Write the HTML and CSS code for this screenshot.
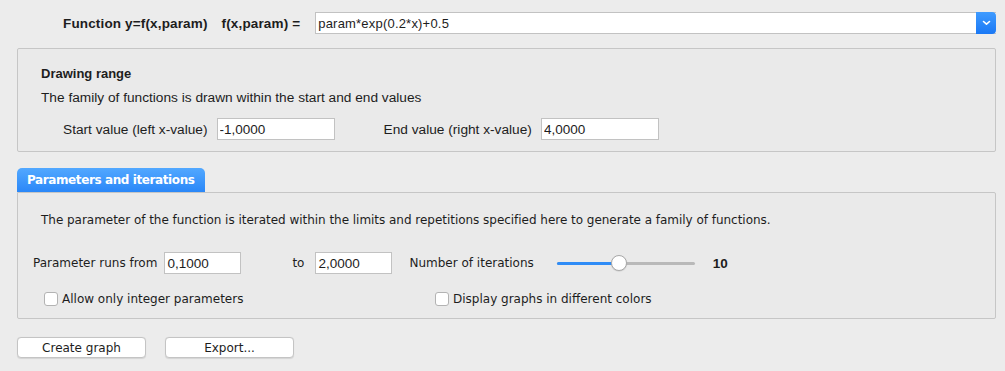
FILE: index.html
```html
<!DOCTYPE html>
<html lang="en">
<head>
  <meta name="viewport" content="width=device-width, initial-scale=1.0">
  <link rel="stylesheet" href="styles.css">
</head>
<body>
  <div class="window">

    <div class="func-row">
      <span class="func-label">Function y=f(x,param)</span>
      <span class="func-label eq">f(x,param) =</span>
      <div class="combo">
        <span class="combo-text">param*exp(0.2*x)+0.5</span>
        <div class="combo-btn">
          <svg width="9" height="6" viewBox="0 0 9 6"><path d="M1.5 1.5 L4.5 4.2 L7.5 1.5" fill="none" stroke="#fff" stroke-width="1.6" stroke-linecap="round" stroke-linejoin="round"/></svg>
        </div>
      </div>
    </div>

    <!-- Drawing range -->
    <div class="group range">
      <div class="group-title">Drawing range</div>
      <div class="group-desc">The family of functions is drawn within the start and end values</div>
      <div class="range-row">
        <span class="lbl start-lbl">Start value (left x-value)</span>
        <input class="field rfield" type="text" value="-1,0000">
        <span class="lbl end-lbl">End value (right x-value)</span>
        <input class="field rfield" type="text" value="4,0000">
      </div>
    </div>

    <!-- Parameters -->
    <div class="tab">Parameters and iterations</div>
    <div class="group params">
      <div class="params-desc">The parameter of the function is iterated within the limits and repetitions specified here to generate a family of functions.</div>
      <div class="params-row">
        <span class="plbl">Parameter runs from</span>
        <input class="field pfield from" type="text" value="0,1000">
        <span class="plbl to-lbl">to</span>
        <input class="field pfield" type="text" value="2,0000">
        <span class="plbl iter-lbl">Number of iterations</span>
        <div class="slider">
          <div class="slider-fill"></div>
          <div class="slider-thumb"></div>
        </div>
        <span class="iter-val">10</span>
      </div>
      <div class="check-row">
        <label class="check first"><span class="box"></span>Allow only integer parameters</label>
        <label class="check second"><span class="box"></span>Display graphs in different colors</label>
      </div>
    </div>

    <div class="buttons">
      <button class="btn">Create graph</button>
      <button class="btn">Export...</button>
    </div>

  </div>
</body>
</html>
```

FILE: styles.css
```css
html,
body {
  margin: 0;
  padding: 0;
  background: #ececec;
  font-family: "Liberation Sans", Arial, sans-serif;
  font-size: 13.7px;
  color: #1d1d1d;
}

.window {
  width: 1005px;
  height: 371px;
  overflow: hidden;
}

/* function row */
.func-row {
  display: flex;
  align-items: center;
  padding-top: 12px;
  height: 22px;
}

.func-label {
  font-weight: bold;
  font-size: 13.5px;
  letter-spacing: 0.15px;
  margin-left: 63px;
}

.func-label.eq {
  margin-left: 14px;
}

.combo {
  margin-left: 15px;
  flex: 1;
  margin-right: 9px;
  height: 22px;
  box-sizing: border-box;
  background: #fff;
  border: 1px solid #c2c2c2;
  border-right: none;
  display: flex;
  align-items: center;
}

.combo-text {
  flex: 1;
  padding-left: 2px;
  font-size: 13px;
  letter-spacing: 0.2px;
}

.combo-btn {
  width: 20px;
  height: 22px;
  margin-top: -1px;
  margin-bottom: -1px;
  background: linear-gradient(#3f9bff, #1a78f5);
  border-radius: 0 4px 4px 0;
  display: flex;
  align-items: center;
  justify-content: center;
}

/* grouped boxes */
.group {
  margin-left: 17px;
  width: 979px;
  box-sizing: border-box;
  border: 1px solid #c6c6c6;
  border-radius: 2px;
  background: #eaeaea;
}

.range {
  margin-top: 14px;
  height: 104px;
  padding: 17px 0 0 23px;
}

.group-title {
  font-weight: bold;
  font-size: 13px;
  height: 16px;
  line-height: 16px;
}

.group-desc {
  margin-top: 8px;
  height: 16px;
  line-height: 16px;
}

.range-row {
  display: flex;
  align-items: center;
  margin-top: 12px;
  height: 22px;
}

.start-lbl {
  margin-left: 22px;
}

.end-lbl {
  margin-left: 49px;
}

.field {
  margin: 0 0 0 7px;
  height: 22px;
  width: 118px;
  box-sizing: border-box;
  border: 1px solid #c2c2c2;
  background: #fff;
  padding: 0 2px;
  font-family: "Liberation Sans", Arial, sans-serif;
  font-size: 13.5px;
  color: #1d1d1d;
  outline: none;
}

.rfield {
  margin-left: 9px;
}

/* tab */
.tab {
  margin: 16px 0 0 17px;
  width: 188px;
  height: 24px;
  box-sizing: border-box;
  background: linear-gradient(#52a8ff, #2a87f8);
  border-radius: 5px 5px 0 0;
  color: #fff;
  font-family: "DejaVu Sans", Verdana, sans-serif;
  font-weight: bold;
  font-size: 12px;
  line-height: 25px;
  padding-left: 10px;
  letter-spacing: -0.4px;
}

.params {
  height: 127px;
  border-top-left-radius: 0;
  font-family: "DejaVu Sans", Verdana, sans-serif;
  font-size: 12px;
}

.params-desc {
  margin: 19px 0 0 23px;
  height: 16px;
  line-height: 16px;
  letter-spacing: -0.03px;
}

.params-row {
  display: flex;
  align-items: center;
  margin-top: 24px;
  height: 22px;
}

.params-row .plbl:first-child {
  margin-left: 15px;
}

.pfield {
  width: 77px;
  font-size: 13.5px;
}

.pfield.from {
  margin-left: 7px;
}

.to-lbl {
  margin-left: 51px;
  margin-right: 4px;
}

.iter-lbl {
  margin-left: 17px;
}

.slider {
  position: relative;
  margin-left: 23px;
  width: 138px;
  height: 3px;
  background: #b9b9b9;
  border-radius: 2px;
}

.slider-fill {
  width: 62px;
  height: 3px;
  background: #2f8cf6;
  border-radius: 2px;
}

.slider-thumb {
  position: absolute;
  left: 54px;
  top: -7px;
  width: 16px;
  height: 16px;
  box-sizing: border-box;
  border-radius: 50%;
  background: #fff;
  border: 1px solid #a9a9a9;
  box-shadow: 0 0.5px 1px rgba(0, 0, 0, 0.15);
}

.iter-val {
  margin-left: 18px;
  font-weight: bold;
  font-family: "Liberation Sans", Arial, sans-serif;
  font-size: 13.5px;
}

.check-row {
  display: flex;
  align-items: center;
  margin-top: 17px;
  height: 16px;
}

.check {
  display: flex;
  align-items: center;
}

.check.first {
  margin-left: 26px;
  width: 391px;
}

.box {
  width: 14px;
  height: 14px;
  box-sizing: border-box;
  background: #fff;
  border: 1px solid #b3b3b3;
  border-radius: 3px;
  margin-right: 4px;
}

/* bottom buttons */
.buttons {
  display: flex;
  gap: 19px;
  margin: 18px 0 0 17px;
}

.btn {
  width: 129px;
  height: 21px;
  box-sizing: border-box;
  background: #fff;
  border: 1px solid #c4c4c4;
  border-radius: 4px;
  box-shadow: 0 0.5px 1px rgba(0, 0, 0, 0.1);
  font-family: "DejaVu Sans", Verdana, sans-serif;
  font-size: 12px;
  color: #1d1d1d;
  padding: 0;
}
```
